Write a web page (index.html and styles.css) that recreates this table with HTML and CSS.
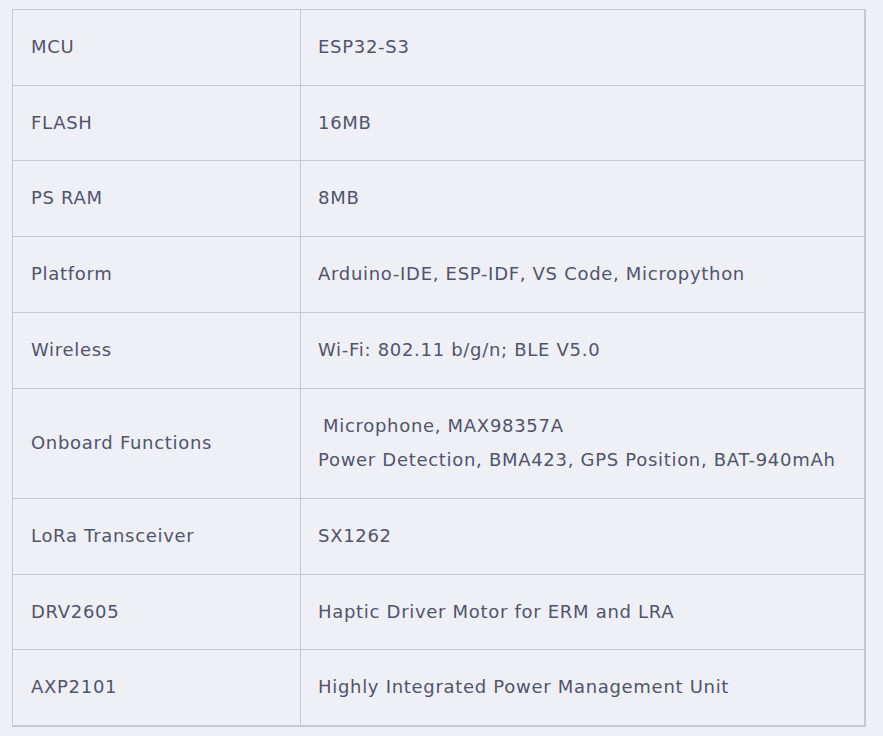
FILE: index.html
```html
<!DOCTYPE html>
<html>
<head>
<meta charset="utf-8">
<link rel="stylesheet" href="styles.css">
</head>
<body>
<table class="spec">
  <tr><td class="key">MCU</td><td class="val">ESP32-S3</td></tr>
  <tr><td class="key">FLASH</td><td class="val">16MB</td></tr>
  <tr><td class="key">PS RAM</td><td class="val">8MB</td></tr>
  <tr><td class="key">Platform</td><td class="val">Arduino-IDE, ESP-IDF, VS Code, Micropython</td></tr>
  <tr><td class="key">Wireless</td><td class="val">Wi-Fi: 802.11 b/g/n; BLE V5.0</td></tr>
  <tr><td class="key">Onboard Functions</td><td class="val"><div class="indent">Microphone, MAX98357A</div><div>Power Detection, BMA423, GPS Position, BAT-940mAh</div></td></tr>
  <tr><td class="key">LoRa Transceiver</td><td class="val">SX1262</td></tr>
  <tr><td class="key">DRV2605</td><td class="val">Haptic Driver Motor for ERM and LRA</td></tr>
  <tr><td class="key">AXP2101</td><td class="val">Highly Integrated Power Management Unit</td></tr>
</table>
</body>
</html>
```
FILE: styles.css
```css
html, body {
  margin: 0;
  padding: 0;
  background: #eff0f6;
}
body {
  padding: 9px 0 0 12px;
  font-family: "DejaVu Sans", sans-serif;
  font-size: 18px;
  letter-spacing: 0.7px;
  color: #50546c;
}
.spec {
  border-collapse: collapse;
  width: 854px;
  border: 1px solid #c6c7d1;
  border-right-width: 2px;
  border-bottom-width: 2px;
}
.spec td {
  border: 1px solid #c6c7d1;
  padding: 20px 17px 20px 18px;
  line-height: 34.7px;
  vertical-align: middle;
}
.spec td.val {
  padding-left: 17px;
}
.key {
  width: 252px;
}
.indent {
  padding-left: 5px;
}
```
